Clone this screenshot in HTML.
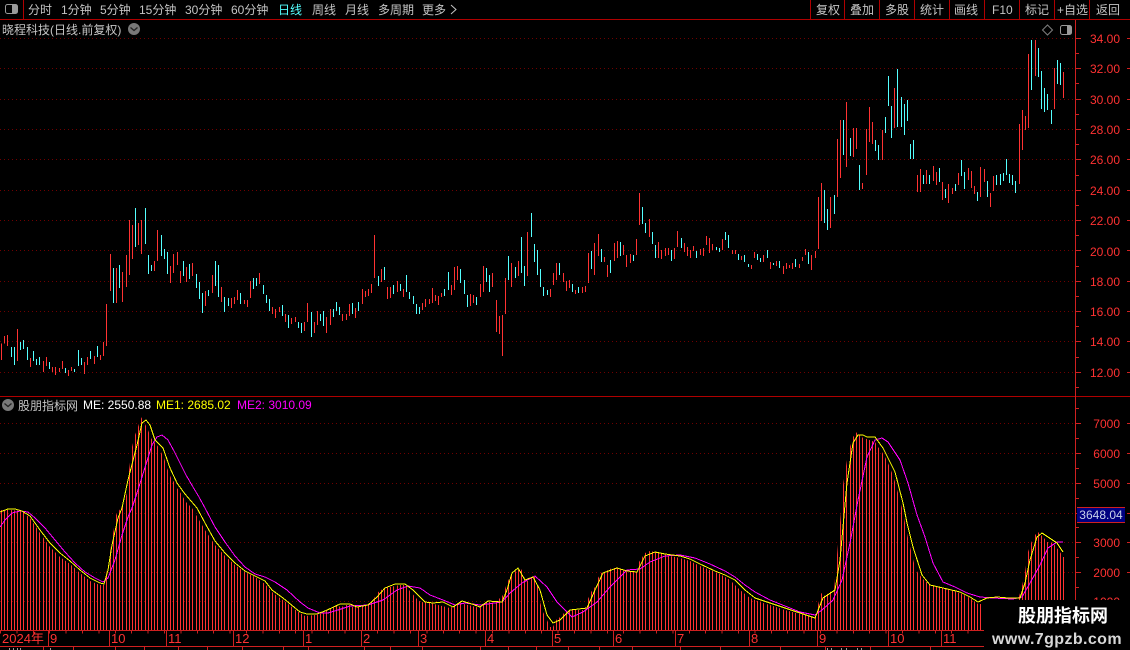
<!DOCTYPE html>
<html><head><meta charset="utf-8"><style>
html,body{margin:0;padding:0;background:#000;width:1130px;height:650px;overflow:hidden}
svg{display:block}
text{font-family:"Liberation Sans","WenQuanYi Zen Hei","Noto Sans CJK SC",sans-serif;font-size:12px}
.t{fill:#c4c4c4}
.r{fill:#ff3232}
.cx{shape-rendering:crispEdges}
</style></head><body>
<svg xmlns="http://www.w3.org/2000/svg" width="1130" height="650" viewBox="0 0 1130 650">
<defs><clipPath id="h"><polygon points="0,510 10,510 22,511 30,518 40,533 50,547 60,557 70,564 80,573 90,581 100,585 104,585 108,565 112,540 116,515 123,505 127,493 129,470 132,447 135,435 138,427 141,417 144,422 148,430 151,438 154,442 157,445 161,452 164,458 167,468 171,478 174,482 177,488 180,492 183,497 186,502 189,505 192,508 205,530 215,545 225,556 235,565 245,572 255,577 265,584 273,593 280,598 287,603 293,608 300,613 305,616 315,615 320,614 328,610 333,607 338,605 341,608 344,605 350,605 351,607 360,607 368,605 372,602 377,593 381,590 385,588 390,587 395,586 400,585 405,585 409,590 412,593 415,597 418,600 421,602 430,603 450,608 460,603 480,608 485,602 490,602 495,603 503,595 507,583 510,577 514,572 518,570 521,569 523,572 525,581 528,581 531,577 535,577 538,587 540,602 543,612 547,620 550,627 553,627 556,620 559,618 562,615 565,612 568,610 585,610 588,599 591,592 595,587 598,578 601,573 604,572 608,570 612,568 618,568 622,570 627,572 637,572 639,562 645,553 650,551 660,553 670,556 680,558 690,561 700,566 710,570 720,574 730,580 740,590 750,598 760,602 770,605 785,610 800,614 815,618 818,605 821,593 825,596 830,592 834,590 837,555 841,512 843,485 847,460 850,447 853,437 857,432 861,437 875,442 878,447 882,452 885,457 888,463 892,473 895,482 898,493 902,508 905,523 908,538 912,555 915,567 918,573 922,578 925,581 928,583 935,586 940,587 950,590 960,593 970,598 978,604 982,604 1018,600 1022,586 1025,572 1028,552 1031,543 1035,535 1038,532 1041,535 1044,538 1047,542 1050,542 1053,543 1060,552 1063,557 1065,557 1065,630 0,630"/></clipPath></defs>

<!-- frame lines -->
<g class="cx" stroke="#b00000" fill="none">
<path d="M0 19.5H1130M0 396.5H1130M23.5 0V19M810.5 0V19M844.5 0V19M879.5 0V19M914.5 0V19M949.5 0V19M984.5 0V19M1019.5 0V19M1054.5 0V19M1089.5 0V19"/>
</g>

<!-- grids -->
<g class="cx" stroke="#700000" stroke-dasharray="1 3" fill="none">
<path d="M0 38.5H1075M0 68.5H1075M0 99.5H1075M0 129.5H1075M0 159.5H1075M0 190.5H1075M0 220.5H1075M0 250.5H1075M0 281.5H1075M0 311.5H1075M0 341.5H1075M0 372.5H1075"/>
<path d="M0 423.5H1075M0 453.5H1075M0 483.5H1075M0 513.5H1075M0 542.5H1075M0 572.5H1075M0 601.5H1075"/>
</g>

<!-- right axis -->
<g class="cx" stroke="#d02020" fill="none">
<path d="M1075.5 20V646"/>
<path d="M1076 38.5h5M1076 68.5h5M1076 99.5h5M1076 129.5h5M1076 159.5h5M1076 190.5h5M1076 220.5h5M1076 250.5h5M1076 281.5h5M1076 311.5h5M1076 341.5h5M1076 372.5h5"/>
<path d="M1076 53.5h3M1076 83.5h3M1076 114.5h3M1076 144.5h3M1076 175.5h3M1076 205.5h3M1076 235.5h3M1076 266.5h3M1076 296.5h3M1076 326.5h3M1076 357.5h3M1076 387.5h3"/>
<path d="M1076 423.5h5M1076 453.5h5M1076 483.5h5M1076 513.5h5M1076 542.5h5M1076 572.5h5M1076 601.5h5"/>
<path d="M1076 408.5h3M1076 438.5h3M1076 468.5h3M1076 498.5h3M1076 527.5h3M1076 557.5h3M1076 587.5h3"/>
<path d="M1127 38.5h3M1127 68.5h3M1127 99.5h3M1127 129.5h3M1127 159.5h3M1127 190.5h3M1127 220.5h3M1127 250.5h3M1127 281.5h3M1127 311.5h3M1127 341.5h3M1127 372.5h3M1127 423.5h3M1127 453.5h3M1127 483.5h3M1127 513.5h3M1127 542.5h3M1127 572.5h3"/>
</g>
<g class="r" text-anchor="end">
<text x="1120" y="43">34.00</text><text x="1120" y="73">32.00</text><text x="1120" y="104">30.00</text><text x="1120" y="134">28.00</text><text x="1120" y="164">26.00</text><text x="1120" y="195">24.00</text><text x="1120" y="225">22.00</text><text x="1120" y="256">20.00</text><text x="1120" y="286">18.00</text><text x="1120" y="316">16.00</text><text x="1120" y="346">14.00</text><text x="1120" y="377">12.00</text>
<text x="1120" y="428">7000</text><text x="1120" y="458">6000</text><text x="1120" y="488">5000</text><text x="1120" y="547">3000</text><text x="1120" y="577">2000</text><text x="1120" y="606">1000</text>
</g>
<rect class="cx" x="1077" y="507" width="48" height="16" fill="#000080"/>
<path class="cx" d="M1077 507.5h48M1077 522.5h48" stroke="#d02020"/>
<text x="1101" y="519" text-anchor="middle" fill="#c8d0e8">3648.04</text>

<!-- candles -->
<g class="cx" fill="none" stroke-width="3">
<g transform="translate(.17 200) scale(.33333)">
<path stroke="#ff3232" d="M4 430V480M13 408V430M22 405V438M52 387V483M91 474V501M130 483V516M139 471V498M157 501V516M166 501V525M178 504V516M187 483V507M205 510V528M214 501V513M253 486V522M262 471V495M283 468V492M301 465V480M310 426V468M319 312V438M331 162V273M349 204V309M367 216V306M379 165V261M388 60V225M397 75V177M415 69V135M424 60V162M463 183V213M472 90V183M511 198V249M520 162V219M532 156V195M541 213V249M559 201V246M577 189V228M616 273V318M637 225V279M664 261V306M694 294V324M703 291V312M712 270V300"/>
<path stroke="#54ffff" d="M34 441V471M43 441V495M61 426V450M70 420V447M82 441V480M100 453V483M109 477V495M118 471V495M148 486V507M196 504V519M223 507V516M235 450V498M244 474V495M271 453V477M292 438V471M340 204V309M358 195V264M406 24V141M436 24V132M445 165V222M454 195V213M484 105V168M493 147V177M502 156V222M550 183V228M568 192V237M589 222V264M598 246V297M607 279V339M625 270V288M646 183V258M655 195V291M673 291V336M685 294V318"/>
</g>
<g transform="translate(240.17 190) scale(.33333)">
<path stroke="#ff3232" d="M13 330V342M22 330V351M31 273V324M58 249V282M97 351V372M106 357V384M118 351V366M136 372V396M154 384V402M166 381V396M193 396V423M202 339V396M223 396V429M232 363V405M259 381V429M271 357V405M307 372V393M319 372V390M328 342V378M346 354V384M367 297V342M376 303V321M385 297V318M394 282V309M403 135V264M424 237V276M442 291V327M451 291V324M472 273V306M490 297V321M547 339V360M556 327V351M568 327V342M577 294V339M586 315V333M595 318V345M604 309V321M634 285V315M643 231V300M652 228V270M691 312V348M700 315V339M721 282V321M730 228V306M757 249V291M769 330V426M778 378V432M787 375V498M796 264V372M814 219V291M835 213V258M862 126V258"/>
<path stroke="#54ffff" d="M1 309V342M40 264V297M49 264V288M70 285V312M79 315V339M88 327V363M127 345V378M145 375V414M175 396V414M184 399V429M214 366V441M241 372V393M250 363V408M280 357V381M289 336V363M298 351V375M337 339V372M355 336V363M415 258V288M433 231V270M460 285V312M481 282V303M499 255V306M508 306V327M520 318V342M529 342V372M538 351V372M613 297V318M625 246V300M661 237V279M673 270V312M682 315V351M709 321V345M739 234V276M748 255V306M805 198V270M826 231V264M844 141V249M853 228V288M874 69V141M883 162V216M892 180V255"/>
</g>
<g transform="translate(540.17 190) scale(.33333)">
<path stroke="#ff3232" d="M31 297V321M40 249V285M49 219V270M70 249V276M79 273V303M88 270V294M106 300V312M127 291V309M136 288V306M145 189V279M163 159V255M175 132V198M193 201V216M202 225V261M223 159V213M232 153V204M250 165V195M259 195V231M271 192V219M289 147V195M298 9V105M328 87V141M355 156V204M364 180V207M376 174V198M385 174V195M403 174V207M412 123V171M433 159V186M442 171V198M451 180V204M460 168V183M481 177V195M490 174V198M499 138V165M508 144V189M517 162V180M547 147V180M577 180V192M586 180V192M604 198V210M634 225V237M643 186V204M670 195V216M691 216V237M709 213V228M730 228V252M739 219V237M748 225V234M757 219V237M778 222V234M787 201V213M796 177V195M814 195V240M826 183V204"/>
<path stroke="#54ffff" d="M1 237V291M10 291V318M22 300V315M58 219V255M97 282V306M115 291V309M154 183V237M184 177V216M211 210V249M241 156V198M280 195V213M307 51V102M316 99V129M337 126V162M346 165V204M394 180V213M424 144V174M469 183V204M529 171V180M538 174V186M556 126V150M565 135V174M595 192V210M613 195V216M625 222V231M652 192V210M661 204V216M682 180V204M700 219V225M718 213V234M766 207V231M805 186V222"/>
</g>
<g transform="translate(800.17 30) scale(.33333)">
<path stroke="#ff3232" d="M55 501V657M64 459V573M91 501V594M112 327V501M121 270V444M139 216V411M160 294V381M169 294V357M187 459V477M199 297V435M208 231V336M217 276V342M247 300V390M283 174V294M352 435V486M361 417V486M379 420V462M400 408V453M409 426V465M427 456V510M445 462V519M457 474V492M475 429V465M505 414V450M514 423V474M523 468V492M541 411V501M553 417V456M571 489V531M580 438V483M658 282V462M667 240V360M676 258V300M685 72V294M706 30V138M763 114V237M790 126V204"/>
<path stroke="#54ffff" d="M73 480V579M82 537V600M103 495V552M130 270V375M151 324V378M178 405V480M226 330V363M235 345V390M256 261V309M265 138V228M274 228V324M292 117V291M304 201V291M313 222V315M322 210V273M331 342V387M340 330V387M370 435V462M388 435V462M418 414V456M436 477V504M466 462V483M484 390V438M493 426V477M532 486V513M562 453V501M589 435V465M601 432V465M610 429V453M619 387V435M628 432V459M637 435V465M646 453V489M694 30V180M715 54V141M724 123V237M733 174V246M742 192V240M754 240V282M772 90V162M781 99V165"/>
</g>
</g>

<!-- histogram -->
<g clip-path="url(#h)"><g class="cx" fill="none" stroke="#ff3232" stroke-width="3">
<path transform="translate(.17 400) scale(.33333)" d="M4 0V690M13 0V690M22 0V690M34 0V690M43 0V690M52 0V690M61 0V690M70 0V690M82 0V690M91 0V690M100 0V690M109 0V690M118 0V690M130 0V690M139 0V690M148 0V690M157 0V690M166 0V690M178 0V690M187 0V690M196 0V690M205 0V690M214 0V690M223 0V690M235 0V690M244 0V690M253 0V690M262 0V690M271 0V690M283 0V690M292 0V690M301 0V690M310 0V690M319 0V690M331 0V690M340 0V690M349 0V690M358 0V690M367 0V690M379 0V690M388 0V690M397 0V690M406 0V690M415 0V690M424 0V690M436 0V690M445 0V690M454 0V690M463 0V690M472 0V690M484 0V690M493 0V690M502 0V690M511 0V690M520 0V690M532 0V690M541 0V690M550 0V690M559 0V690M568 0V690M577 0V690M589 0V690M598 0V690M607 0V690M616 0V690M625 0V690M637 0V690M646 0V690M655 0V690M664 0V690M673 0V690M685 0V690M694 0V690M703 0V690M712 0V690"/>
<path transform="translate(240.17 400) scale(.33333)" d="M1 0V690M13 0V690M22 0V690M31 0V690M40 0V690M49 0V690M58 0V690M70 0V690M79 0V690M88 0V690M97 0V690M106 0V690M118 0V690M127 0V690M136 0V690M145 0V690M154 0V690M166 0V690M175 0V690M184 0V690M193 0V690M202 0V690M214 0V690M223 0V690M232 0V690M241 0V690M250 0V690M259 0V690M271 0V690M280 0V690M289 0V690M298 0V690M307 0V690M319 0V690M328 0V690M337 0V690M346 0V690M355 0V690M367 0V690M376 0V690M385 0V690M394 0V690M403 0V690M415 0V690M424 0V690M433 0V690M442 0V690M451 0V690M460 0V690M472 0V690M481 0V690M490 0V690M499 0V690M508 0V690M520 0V690M529 0V690M538 0V690M547 0V690M556 0V690M568 0V690M577 0V690M586 0V690M595 0V690M604 0V690M613 0V690M625 0V690M634 0V690M643 0V690M652 0V690M661 0V690M673 0V690M682 0V690M691 0V690M700 0V690M709 0V690M721 0V690M730 0V690M739 0V690M748 0V690M757 0V690M769 0V690M778 0V690M787 0V690M796 0V690M805 0V690M814 0V690M826 0V690M835 0V690M844 0V690M853 0V690M862 0V690M874 0V690M883 0V690M892 0V690"/>
<path transform="translate(540.17 400) scale(.33333)" d="M1 0V690M10 0V690M22 0V690M31 0V690M40 0V690M49 0V690M58 0V690M70 0V690M79 0V690M88 0V690M97 0V690M106 0V690M115 0V690M127 0V690M136 0V690M145 0V690M154 0V690M163 0V690M175 0V690M184 0V690M193 0V690M202 0V690M211 0V690M223 0V690M232 0V690M241 0V690M250 0V690M259 0V690M271 0V690M280 0V690M289 0V690M298 0V690M307 0V690M316 0V690M328 0V690M337 0V690M346 0V690M355 0V690M364 0V690M376 0V690M385 0V690M394 0V690M403 0V690M412 0V690M424 0V690M433 0V690M442 0V690M451 0V690M460 0V690M469 0V690M481 0V690M490 0V690M499 0V690M508 0V690M517 0V690M529 0V690M538 0V690M547 0V690M556 0V690M565 0V690M577 0V690M586 0V690M595 0V690M604 0V690M613 0V690M625 0V690M634 0V690M643 0V690M652 0V690M661 0V690M670 0V690M682 0V690M691 0V690M700 0V690M709 0V690M718 0V690M730 0V690M739 0V690M748 0V690M757 0V690M766 0V690M778 0V690M787 0V690M796 0V690M805 0V690M814 0V690M826 0V690"/>
<path transform="translate(800.17 400) scale(.33333)" d="M55 0V690M64 0V690M73 0V690M82 0V690M91 0V690M103 0V690M112 0V690M121 0V690M130 0V690M139 0V690M151 0V690M160 0V690M169 0V690M178 0V690M187 0V690M199 0V690M208 0V690M217 0V690M226 0V690M235 0V690M247 0V690M256 0V690M265 0V690M274 0V690M283 0V690M292 0V690M304 0V690M313 0V690M322 0V690M331 0V690M340 0V690M352 0V690M361 0V690M370 0V690M379 0V690M388 0V690M400 0V690M409 0V690M418 0V690M427 0V690M436 0V690M445 0V690M457 0V690M466 0V690M475 0V690M484 0V690M493 0V690M505 0V690M514 0V690M523 0V690M532 0V690M541 0V690M553 0V690M562 0V690M571 0V690M580 0V690M589 0V690M601 0V690M610 0V690M619 0V690M628 0V690M637 0V690M646 0V690M658 0V690M667 0V690M676 0V690M685 0V690M694 0V690M706 0V690M715 0V690M724 0V690M733 0V690M742 0V690M754 0V690M763 0V690M772 0V690M781 0V690M790 0V690"/>
</g></g>

<!-- lines -->
<g class="cx" fill="none">
<polyline stroke="#ff00ff" points="0,527 5,520 12,513 20,511 28,512 35,518 45,528 55,540 65,552 75,563 85,572 95,578 103,582 108,578 115,560 122,535 128,517 132,508 137,493 142,477 147,461 152,445 157,437 162,435 168,440 174,451 180,463 186,475 193,487 199,497 205,508 215,527 225,542 235,556 245,567 255,574 265,577 275,582 287,590 300,602 308,608 320,613 328,613 338,610 350,606 368,605 383,600 397,590 408,586 420,588 430,595 443,600 455,605 465,603 480,605 502,602 510,593 522,583 535,576 547,587 557,602 572,617 583,612 597,602 610,587 627,570 640,569 650,562 665,556 680,555 695,558 710,564 725,571 735,577 745,585 755,592 770,600 785,606 800,612 815,615 822,610 833,600 842,580 850,543 858,500 867,457 875,440 882,438 888,442 900,460 908,483 917,515 925,537 933,563 943,582 955,587 967,593 980,597 993,598 1013,599 1022,597 1030,583 1040,565 1048,548 1057,542 1063,542"/>
<polyline stroke="#ffff00" points="0,512 8,509 15,509 22,511 30,516 40,530 50,543 60,553 70,561 80,570 90,578 100,583 104,584 108,570 112,545 118,518 122,508 128,480 137,445 142,423 146,420 150,425 155,440 163,448 170,468 177,483 185,494 197,508 205,523 215,541 225,553 235,563 245,571 255,576 265,581 272,590 283,598 300,612 307,614 317,614 325,611 340,604 350,604 357,607 368,605 377,597 385,588 395,584 405,584 413,590 425,602 433,603 443,602 453,607 462,601 472,604 480,607 488,601 502,602 507,590 512,573 518,568 525,580 533,577 540,590 547,615 553,623 560,620 570,610 587,608 595,590 603,573 617,568 627,571 637,572 645,556 655,552 665,554 680,556 690,559 700,564 715,571 725,575 735,580 745,590 755,598 770,603 785,608 800,613 815,618 823,598 835,590 840,560 847,483 853,443 858,435 863,435 867,437 875,437 883,448 895,472 903,503 907,523 913,547 922,575 930,585 943,588 960,592 970,597 978,602 987,598 997,597 1008,598 1020,598 1025,583 1030,560 1037,537 1042,533 1048,537 1057,543 1063,552"/>
</g>

<!-- date axis -->
<g class="cx" fill="none" stroke="#d02020">
<path d="M0 630.5H1075M0 646.5H1130"/>
<path d="M48.5 631V646M109.5 631V646M166.5 631V646M233.5 631V646M303.5 631V646M361.5 631V646M418.5 631V646M485.5 631V646M552.5 631V646M613.5 631V646M675.5 631V646M749.5 631V646M817.5 631V646M888.5 631V646M941.5 631V646"/>
<line x1="0" y1="632" x2="1075" y2="632" stroke-width="3" stroke-dasharray="1 15.4"/>
<path d="M43.5 647V650M73.5 647V650M115.5 647V650M144.5 647V650M178.5 647V650M207.5 647V650M242.5 647V650M283.5 647V650M308.5 647V650M364.5 647V650M390.5 647V650M422.5 647V650M480.5 647V650M508.5 647V650M536.5 647V650M568.5 647V650M599.5 647V650M632.5 647V650M680.5 647V650M720.5 647V650M780.5 647V650M825.5 647V650M870.5 647V650M930.5 647V650"/>
</g>
<path class="cx" d="M9 648h1v2h-1zM13 648h1v2h-1zM17 648h1v2h-1zM20 648h1v2h-1zM50 648h1v2h-1zM827 648h1v2h-1zM831 648h1v2h-1zM841 648h1v2h-1zM846 648h1v2h-1zM857 648h1v2h-1zM861 648h1v2h-1z" fill="#999"/>
<g class="r">
<text x="2" y="643" style="font-size:13px">2024年</text><text x="50" y="643" style="font-size:13px">9</text><text x="111" y="643" style="font-size:13px">10</text><text x="168" y="643" style="font-size:13px">11</text><text x="235" y="643" style="font-size:13px">12</text><text x="305" y="643" style="font-size:13px">1</text><text x="363" y="643" style="font-size:13px">2</text><text x="420" y="643" style="font-size:13px">3</text><text x="487" y="643" style="font-size:13px">4</text><text x="554" y="643" style="font-size:13px">5</text><text x="615" y="643" style="font-size:13px">6</text><text x="677" y="643" style="font-size:13px">7</text><text x="751" y="643" style="font-size:13px">8</text><text x="819" y="643" style="font-size:13px">9</text><text x="890" y="643" style="font-size:13px">10</text><text x="943" y="643" style="font-size:13px">11</text>
</g>

<!-- toolbar -->
<rect x="5.5" y="4.500" width="12" height="9" rx="2" fill="none" stroke="#999"/><rect x="12" y="5" width="5" height="8" fill="#999"/>
<g class="t">
<text x="28" y="14">分时</text><text x="61" y="14">1分钟</text><text x="100" y="14">5分钟</text><text x="139" y="14">15分钟</text><text x="185" y="14">30分钟</text><text x="231" y="14">60分钟</text>
<text x="278" y="14" style="fill:#54ffff">日线</text>
<text x="312" y="14">周线</text><text x="345" y="14">月线</text><text x="378" y="14">多周期</text><text x="422" y="14">更多</text>
<text x="816" y="14">复权</text><text x="850" y="14">叠加</text><text x="885" y="14">多股</text><text x="920" y="14">统计</text><text x="954" y="14">画线</text><text x="992" y="14">F10</text><text x="1025" y="14">标记</text><text x="1057" y="14">+自选</text><text x="1096" y="14">返回</text>
</g>
<path d="M451 5l5 4.500-5 4.500" fill="none" stroke="#c4c4c4"/>

<!-- title -->
<text class="t" x="2" y="34">晓程科技(日线.前复权)</text>
<circle cx="134" cy="29" r="6" fill="#787878"/><path d="M130.500 27.500l3.500 3 3.500-3" fill="none" stroke="#222" stroke-width="1.300"/>
<path d="M1047.500 25l5 5-5 5-5-5z" fill="none" stroke="#808080"/>
<rect x="1060.500" y="25.500" width="11" height="9" rx="2" fill="none" stroke="#999"/><rect x="1067" y="26" width="4" height="8" fill="#999"/>

<!-- legend -->
<circle cx="8" cy="405" r="6" fill="#787878"/><path d="M4.500 403.500l3.500 3 3.500-3" fill="none" stroke="#222" stroke-width="1.300"/>
<text class="t" x="18" y="410">股朋指标网</text>
<text x="83" y="409" fill="#ffffff">ME: 2550.88</text>
<text x="156" y="409" fill="#ffff00">ME1: 2685.02</text>
<text x="237" y="409" fill="#ff00ff">ME2: 3010.09</text>

<!-- watermark -->
<rect x="984" y="600" width="146" height="50" fill="#000"/>
<text x="1063" y="622" text-anchor="middle" fill="#fff" style="font-size:18px;font-weight:bold;font-family:'Noto Sans CJK SC',sans-serif">股朋指标网</text>
<text x="1057" y="644" text-anchor="middle" fill="#d8d8d8" style="font-size:16px;font-weight:bold;letter-spacing:.4px;font-family:'Liberation Sans',sans-serif">www.7gpzb.com</text>
</svg>
</body></html>
